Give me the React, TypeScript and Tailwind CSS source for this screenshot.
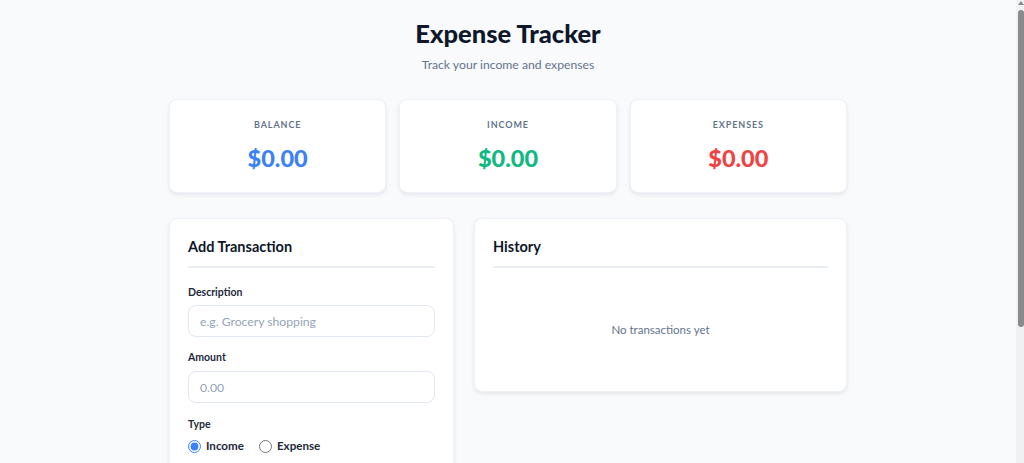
import React from "react";

function StatCard({ label, value, color }: { label: string; value: string; color: string }) {
  return (
    <div className="flex flex-col items-center rounded-lg border border-[#eef1f5] bg-white pt-[17px] pb-[17px] shadow-[0_2px_4px_rgba(15,23,42,0.08)]">
      <div className="text-[9px] font-bold uppercase leading-4 tracking-[0.1em] text-[#64748b]">{label}</div>
      <div className={`mt-[8px] text-[23.5px] font-black leading-[34px] ${color}`}>{value}</div>
    </div>
  );
}

export default function App() {
  return (
    <div className="flex h-screen bg-[#f8fafc] font-['Lato',sans-serif]">
      <div className="min-w-0 flex-1 overflow-hidden">
        <div className="mx-auto w-[678px] pt-[17px] pb-[40px]">
          <h1 className="text-center text-[25.5px] font-black leading-8 text-[#0f172a]">Expense Tracker</h1>
          <p className="mt-[8px] text-center text-[12.2px] leading-4 text-[#64748b]">Track your income and expenses</p>

          <div className="mt-[26px] grid grid-cols-3 gap-[13px]">
            <StatCard label="Balance" value="$0.00" color="text-[#3b82f6]" />
            <StatCard label="Income" value="$0.00" color="text-[#10b981]" />
            <StatCard label="Expenses" value="$0.00" color="text-[#ef4444]" />
          </div>

          <div className="mt-[25px] grid grid-cols-[285px_1fr] items-start gap-[20px]">
            <div className="rounded-lg border border-[#eef1f5] bg-white px-[18px] pt-[17px] pb-[40px] shadow-[0_2px_4px_rgba(15,23,42,0.08)]">
              <h2 className="border-b-2 border-[#e8edf3] pb-[8px] text-[14.5px] font-bold leading-[22px] text-[#0f172a]">Add Transaction</h2>
              <form className="mt-[16px]" onSubmit={(e) => e.preventDefault()}>
                <label className="block text-[10.5px] font-bold leading-4 text-[#1e293b]">Description</label>
                <input
                  type="text"
                  placeholder="e.g. Grocery shopping"
                  className="mt-[5px] block h-[32px] w-full rounded-lg border border-[#e2e8f0] px-[11px] text-[12.2px] text-[#0f172a] outline-none placeholder:text-[#94a3b8]"
                />
                <label className="mt-[12px] block text-[10.5px] font-bold leading-4 text-[#1e293b]">Amount</label>
                <input
                  type="number"
                  placeholder="0.00"
                  className="mt-[6px] block h-[32px] w-full rounded-lg border border-[#e2e8f0] px-[11px] text-[12.2px] text-[#0f172a] outline-none placeholder:text-[#94a3b8]"
                />
                <label className="mt-[13px] block text-[10.5px] font-bold leading-4 text-[#1e293b]">Type</label>
                <div className="mt-[6px] flex items-center gap-[15px]">
                  <label className="flex items-center gap-[5px] text-[11.6px] font-bold leading-4 text-[#1e293b]">
                    <input type="radio" name="type" defaultChecked className="m-0 h-[13px] w-[13px] accent-[#3b82f6]" />
                    Income
                  </label>
                  <label className="flex items-center gap-[5px] text-[11.6px] font-bold leading-4 text-[#1e293b]">
                    <input type="radio" name="type" className="m-0 h-[13px] w-[13px] accent-[#3b82f6]" />
                    Expense
                  </label>
                </div>
              </form>
            </div>

            <div className="rounded-lg border border-[#eef1f5] bg-white px-[18px] pt-[17px] shadow-[0_2px_4px_rgba(15,23,42,0.08)]">
              <h2 className="border-b-2 border-[#e8edf3] pb-[8px] text-[14.5px] font-bold leading-[22px] text-[#0f172a]">History</h2>
              <div className="flex h-[123px] items-center justify-center text-[11.5px] text-[#64748b]">No transactions yet</div>
            </div>
          </div>
        </div>
      </div>
      <div className="flex w-[8px] shrink-0 flex-col bg-[#f1f1f1] pl-[2px]">
        <div className="mx-auto mt-[1px] h-0 w-0 border-x-[3px] border-b-[4px] border-x-transparent border-b-[#8a8a8a]" />
        <div className="mt-[5px] h-[317px] rounded-full bg-[#8a8a8a]" />
      </div>
    </div>
  );
}
